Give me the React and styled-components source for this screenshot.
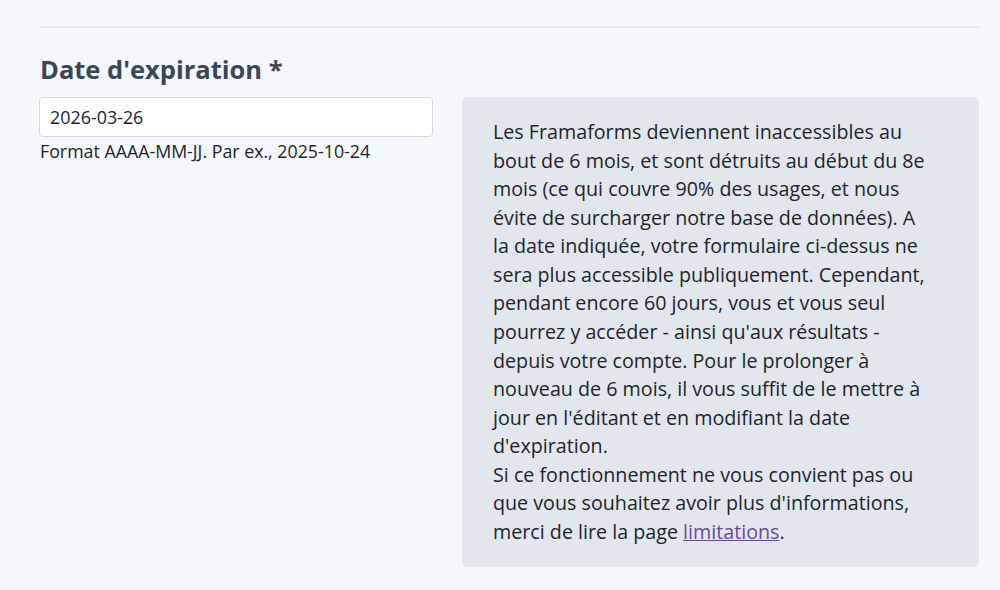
import React from 'react';
import styled, { createGlobalStyle } from 'styled-components';

const GlobalStyle = createGlobalStyle`
  html, body {
    margin: 0;
    padding: 0;
    background: #f5f8fb;
    font-family: "Open Sans", "Noto Sans", sans-serif;
    color: #212529;
  }
`;

// wrapped as on the reference page
const noticeLines = [
  'Les Framaforms deviennent inaccessibles au',
  'bout de 6 mois, et sont détruits au début du 8e',
  'mois (ce qui couvre 90% des usages, et nous',
  'évite de surcharger notre base de données). A',
  'la date indiquée, votre formulaire ci-dessus ne',
  'sera plus accessible publiquement. Cependant,',
  'pendant encore 60 jours, vous et vous seul',
  "pourrez y accéder - ainsi qu'aux résultats -",
  'depuis votre compte. Pour le prolonger à',
  'nouveau de 6 mois, il vous suffit de le mettre à',
  "jour en l'éditant et en modifiant la date",
  "d'expiration.",
  'Si ce fonctionnement ne vous convient pas ou',
  "que vous souhaitez avoir plus d'informations,",
];

function App() {
  return (
    <>
      <GlobalStyle />
      <Page>
        <Divider />
        <Label htmlFor="expiration">Date d'expiration *</Label>
        <Row>
          <Field>
            <Input id="expiration" type="text" defaultValue="2026-03-26" />
            <Help>Format AAAA-MM-JJ. Par ex., 2025-10-24</Help>
          </Field>
          <Notice>
            {noticeLines.map((line) => (
              <Line key={line}>{line}</Line>
            ))}
            <Line>
              merci de lire la page <Link href="#">limitations</Link>.
            </Line>
          </Notice>
        </Row>
      </Page>
    </>
  );
}

export default App;

const Page = styled.div`
  padding: 26px 21px 0 40px;
`;

const Divider = styled.hr`
  margin: 0 0 24px 0;
  border: none;
  border-top: 2px solid #e6eaef;
`;

const Label = styled.label`
  display: block;
  font-size: 25.5px;
  font-weight: 700;
  color: #3a4759;
  line-height: 34px;
  margin-bottom: 11px;
`;

const Row = styled.div`
  display: grid;
  grid-template-columns: 394px 1fr;
  gap: 29px;
  align-items: start;
  margin-left: -1px;
`;

const Field = styled.div`
  display: flex;
  flex-direction: column;
`;

const Input = styled.input`
  box-sizing: border-box;
  height: 40px;
  width: 100%;
  padding: 0 10px;
  border: 1px solid #d3d8de;
  border-radius: 4px;
  background: #fff;
  font-family: inherit;
  font-size: 17.9px;
  color: #212529;

  &:focus {
    outline: none;
    border-color: #8aa3c2;
  }
`;

const Help = styled.div`
  margin-top: 2px;
  padding-left: 1px;
  font-size: 17.8px;
  line-height: 24px;
  color: #212529;
`;

const Notice = styled.div`
  background: #e2e7ee;
  border-radius: 6px;
  padding: 21px 20px 21px 31px;
  font-size: 19.7px;
  line-height: 28.57px;
  color: #212529;
`;

const Line = styled.span`
  display: block;
  white-space: nowrap;
`;

const Link = styled.a`
  color: #6a4a9c;
  text-decoration: underline;
`;
